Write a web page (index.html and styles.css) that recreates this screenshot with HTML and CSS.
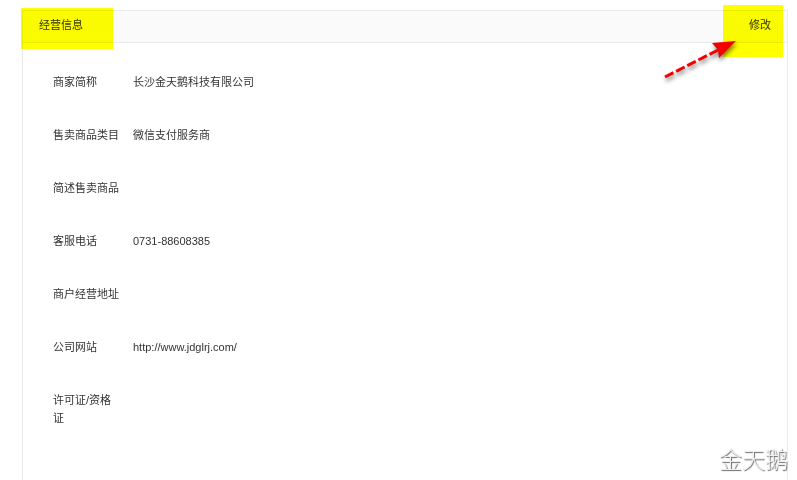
FILE: index.html
```html
<!DOCTYPE html>
<html lang="zh-CN">
<head>
<meta charset="utf-8">
<meta name="viewport" content="width=device-width, initial-scale=1">
<title>经营信息</title>
<link rel="stylesheet" href="styles.css">
</head>
<body>
<main class="panel">
  <header class="panel-head">
    <h1 class="panel-title">经营信息</h1>
    <a class="edit" href="#">修改</a>
    <span class="marker marker-title"></span>
    <span class="marker marker-edit"></span>
    <svg class="arrow" width="80" height="50" viewBox="0 0 80 50" aria-hidden="true">
      <path d="M5 41L60 13" fill="none" stroke="#f50000" stroke-width="3" stroke-dasharray="9.5 3"/>
      <path d="M76 5L59 22L58 14L52 7Z" fill="#f50000"/>
    </svg>
  </header>
  <dl class="fields">
    <div class="field"><dt>商家简称</dt><dd>长沙金天鹅科技有限公司</dd></div>
    <div class="field"><dt>售卖商品类目</dt><dd>微信支付服务商</dd></div>
    <div class="field"><dt>简述售卖商品</dt><dd></dd></div>
    <div class="field"><dt>客服电话</dt><dd>0731-88608385</dd></div>
    <div class="field"><dt>商户经营地址</dt><dd></dd></div>
    <div class="field"><dt>公司网站</dt><dd>http://www.jdglrj.com/</dd></div>
    <div class="field"><dt>许可证/资格证</dt><dd></dd></div>
  </dl>
</main>
<div class="watermark">金天鹅</div>
</body>
</html>
```
FILE: styles.css
```css
* {
  box-sizing: border-box;
}

body {
  margin: 0;
  padding: 10px 9px 0 22px;
  min-height: 100vh;
  display: flex;
  flex-direction: column;
  background: #fff;
  color: #333;
  font: 11px/18px "Liberation Sans", "Noto Sans CJK SC", sans-serif;
}

.panel {
  flex: 1;
  border: 1px solid #ebebeb;
  border-bottom: 0;
}

.panel-head {
  position: relative;
  display: flex;
  align-items: center;
  justify-content: space-between;
  height: 32px;
  padding: 0 16px 3px;
  background: #fafafa;
  border-bottom: 1px solid #ebebeb;
}

.panel-title {
  margin: 0;
  font-size: 11px;
  font-weight: 400;
}

.edit {
  color: inherit;
  text-decoration: none;
}

/* Highlighter strokes and pointer laid over the header */
.marker {
  position: absolute;
  background: #ff0;
  mix-blend-mode: multiply;
  pointer-events: none;
}

.marker-title {
  top: -3px;
  left: -2px;
  width: 92px;
  height: 41px;
}

.marker-edit {
  top: -6px;
  right: 4px;
  width: 60px;
  height: 52px;
}

.arrow {
  position: absolute;
  top: 25px;
  right: 47px;
  filter: drop-shadow(1px 3px 2px rgba(0, 0, 0, 0.5));
  pointer-events: none;
}

.fields {
  display: flex;
  flex-direction: column;
  gap: 35px;
  margin: 0;
  padding: 30px;
}

.field {
  display: grid;
  grid-template-columns: 67px 1fr;
  gap: 13px;
}

.field dd {
  margin: 0;
}

.watermark {
  position: absolute;
  right: 9px;
  bottom: 4px;
  color: #eee;
  font-size: 23px;
  font-weight: 300;
  line-height: 32px;
  text-shadow: 1px 1px 1px #666;
}
```
